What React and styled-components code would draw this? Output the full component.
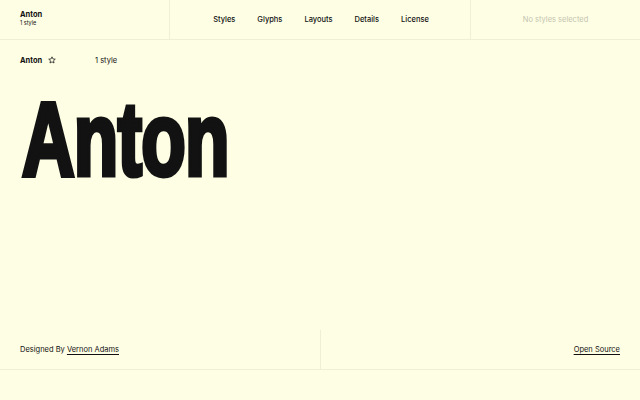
import React from "react";
import styled, { createGlobalStyle } from "styled-components";

const Global = createGlobalStyle`
  html, body { margin: 0; padding: 0; background: #fefee4; }
  body { font-family: Inter, "Liberation Sans", sans-serif; color: #111; }
  * { box-sizing: border-box; }
`;

const Page = styled.div`
  width: 640px;
  height: 400px;
  display: flex;
  flex-direction: column;
  background: #fefee4;
  overflow: hidden;
`;

const Header = styled.header`
  height: 40px;
  display: grid;
  grid-template-columns: 170px 300px 1fr;
  border-bottom: 1px solid #efefd6;
`;

const Brand = styled.div`
  display: flex;
  flex-direction: column;
  justify-content: center;
  padding-left: 20px;
  border-right: 1px solid #efefd6;
`;

const BrandName = styled.div`
  font-size: 7.5px;
  font-weight: 700;
  line-height: 9px;
  margin-top: -2px;
`;

const BrandSub = styled.div`
  font-size: 5.5px;
  line-height: 8px;
`;

const Nav = styled.nav`
  display: flex;
  align-items: center;
  justify-content: center;
  gap: 22px;
  padding-left: 2px;
`;

const NavItem = styled.a`
  font-size: 7.5px;
  font-weight: 500;
  color: #111;
  text-decoration: none;
`;

const Selected = styled.div`
  display: flex;
  align-items: center;
  justify-content: center;
  border-left: 1px solid #efefd6;
  font-size: 7.5px;
  color: #c4c4b0;
`;

const Meta = styled.div`
  display: flex;
  align-items: center;
  height: 40px;
  padding-left: 20px;
  font-size: 7.5px;
`;

const MetaName = styled.div`
  display: flex;
  align-items: center;
  gap: 6px;
  width: 75px;
  font-weight: 700;
`;

const Specimen = styled.div`
  flex: 1;
  padding-left: 22px;
`;

const Big = styled.div`
  font-family: "Liberation Sans", sans-serif;
  font-weight: 700;
  font-size: 104px;
  line-height: 110px;
  letter-spacing: -1px;
  color: #121212;
  -webkit-text-stroke: 5px #121212;
  transform: scaleX(0.7);
  transform-origin: left top;
  margin-top: 4px;
`;

const Footer = styled.footer`
  height: 40px;
  display: grid;
  grid-template-columns: 320px 1fr;
  border-bottom: 1px solid #efefd6;
  font-size: 7.5px;
  margin-bottom: 30px;
`;

const FootCell = styled.div`
  display: flex;
  align-items: center;
  justify-content: ${(p) => (p.$end ? "flex-end" : "flex-start")};
  padding: 0 20px;
  ${(p) => (p.$end ? "border-left: 1px solid #efefd6;" : "")}
`;

const Link = styled.a`
  color: #111;
  text-decoration: underline;
  text-underline-offset: 1.5px;
`;

const Star = () => (
  <svg width="8" height="8" viewBox="0 0 24 24" fill="none" stroke="#111" strokeWidth="2.2" strokeLinejoin="round">
    <polygon points="12,2.5 14.9,8.9 21.8,9.6 16.6,14.2 18.1,21 12,17.5 5.9,21 7.4,14.2 2.2,9.6 9.1,8.9" />
  </svg>
);

export default function App() {
  return (
    <Page>
      <Global />
      <Header>
        <Brand>
          <BrandName>Anton</BrandName>
          <BrandSub>1 style</BrandSub>
        </Brand>
        <Nav>
          {["Styles", "Glyphs", "Layouts", "Details", "License"].map((n) => (
            <NavItem key={n}>{n}</NavItem>
          ))}
        </Nav>
        <Selected>No styles selected</Selected>
      </Header>
      <Meta>
        <MetaName>
          Anton <Star />
        </MetaName>
        <span>1 style</span>
      </Meta>
      <Specimen>
        <Big>Anton</Big>
      </Specimen>
      <Footer>
        <FootCell>
          <span>
            Designed By <Link>Vernon Adams</Link>
          </span>
        </FootCell>
        <FootCell $end>
          <Link>Open Source</Link>
        </FootCell>
      </Footer>
    </Page>
  );
}
